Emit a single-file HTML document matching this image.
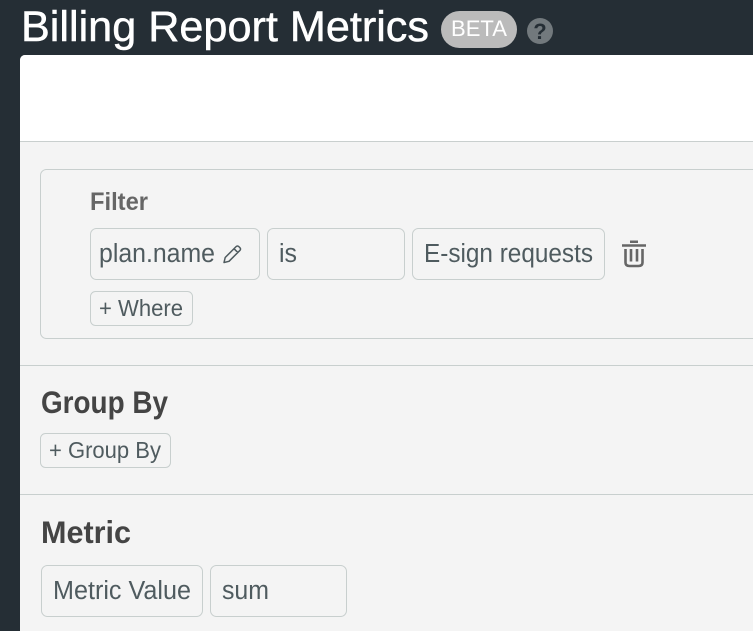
<!DOCTYPE html>
<html><head><meta charset="utf-8"><style>
html,body{margin:0;padding:0;width:753px;height:631px;overflow:hidden;background:#252e35}
svg{display:block;position:absolute;left:0;top:0}
text{font-family:"Liberation Sans",sans-serif}
.t{font-size:25.5px;fill:#4f5b5f}
.s{font-size:23.5px;fill:#4f5b5f}
.h{font-weight:bold;font-size:31.5px;fill:#444}
.b{fill:#f4f4f4;stroke:#c8cfce;stroke-width:1}
</style></head><body>
<svg width="753" height="631" viewBox="0 0 753 631" xmlns="http://www.w3.org/2000/svg">
<rect x="20" y="55" width="760" height="600" rx="5" fill="#f4f4f4"/>
<path d="M20 141V60a5 5 0 0 1 5-5H753V141Z" fill="#fff"/>
<rect x="20" y="141" width="733" height="1" fill="#c9cfce"/>
<rect x="20" y="365" width="733" height="1" fill="#c8cfce"/>
<rect x="20" y="494" width="733" height="1" fill="#c8cfce"/>
<text x="21" y="41" font-size="43" fill="#fff" stroke="#fff" stroke-width="0.5" textLength="408" lengthAdjust="spacingAndGlyphs">Billing Report Metrics</text>
<rect x="441" y="11" width="76" height="37" rx="18.5" fill="#bbb"/>
<text x="451" y="36" font-size="22.500" fill="#fff" textLength="56" lengthAdjust="spacingAndGlyphs">BETA</text>
<circle cx="540" cy="31" r="13" fill="#72797d"/>
<text x="540" y="39" font-size="22" font-weight="bold" fill="#252e35" text-anchor="middle">?</text>
<rect class="b" x="40.5" y="169.5" width="760" height="169" rx="6"/>
<text x="90" y="210" font-size="25" font-weight="bold" fill="#666" textLength="58" lengthAdjust="spacingAndGlyphs">Filter</text>
<rect class="b" x="90.5" y="228.5" width="169" height="51" rx="6"/>
<rect class="b" x="267.5" y="228.5" width="137" height="51" rx="6"/>
<rect class="b" x="412.5" y="228.5" width="192" height="51" rx="6"/>
<text class="t" x="99" y="262" textLength="116" lengthAdjust="spacingAndGlyphs">plan.name</text>
<text class="t" x="279" y="262" textLength="18" lengthAdjust="spacingAndGlyphs">is</text>
<text class="t" x="424" y="262" textLength="169" lengthAdjust="spacingAndGlyphs">E-sign requests</text>
<path d="M224 262.500L225.200 257.500L236.200 246.500A1.700 1.700 0 0 1 238.700 246.500L240 247.800A1.700 1.700 0 0 1 240 250.300L229 261.300ZM234 248.700L238 252.700" fill="none" stroke="#4f5b5f" stroke-width="1.500" stroke-linejoin="round"/>
<path d="M622 245.500H646M630 241.800H638" fill="none" stroke="#666" stroke-width="2.500"/>
<path d="M625.500 249V262.500Q625.500 266 629.500 266H638.500Q642.500 266 642.500 262.500V249M631 249V261.500M637 249V261.500" fill="none" stroke="#666" stroke-width="2.600"/>
<rect class="b" x="90.500" y="291.500" width="102" height="34" rx="5"/>
<text class="s" x="99" y="316" textLength="84" lengthAdjust="spacingAndGlyphs">+ Where</text>
<text class="h" x="41" y="413" textLength="127" lengthAdjust="spacingAndGlyphs">Group By</text>
<rect class="b" x="40.500" y="433.500" width="130" height="34" rx="5"/>
<text class="s" x="49" y="458" textLength="112" lengthAdjust="spacingAndGlyphs">+ Group By</text>
<text class="h" x="41" y="543" textLength="90" lengthAdjust="spacingAndGlyphs">Metric</text>
<rect class="b" x="41.500" y="565.500" width="161" height="51" rx="6"/>
<rect class="b" x="210.500" y="565.500" width="136" height="51" rx="6"/>
<text class="t" x="53" y="599" textLength="138" lengthAdjust="spacingAndGlyphs">Metric Value</text>
<text class="t" x="222" y="599" textLength="47" lengthAdjust="spacingAndGlyphs">sum</text>
</svg>
</body></html>
